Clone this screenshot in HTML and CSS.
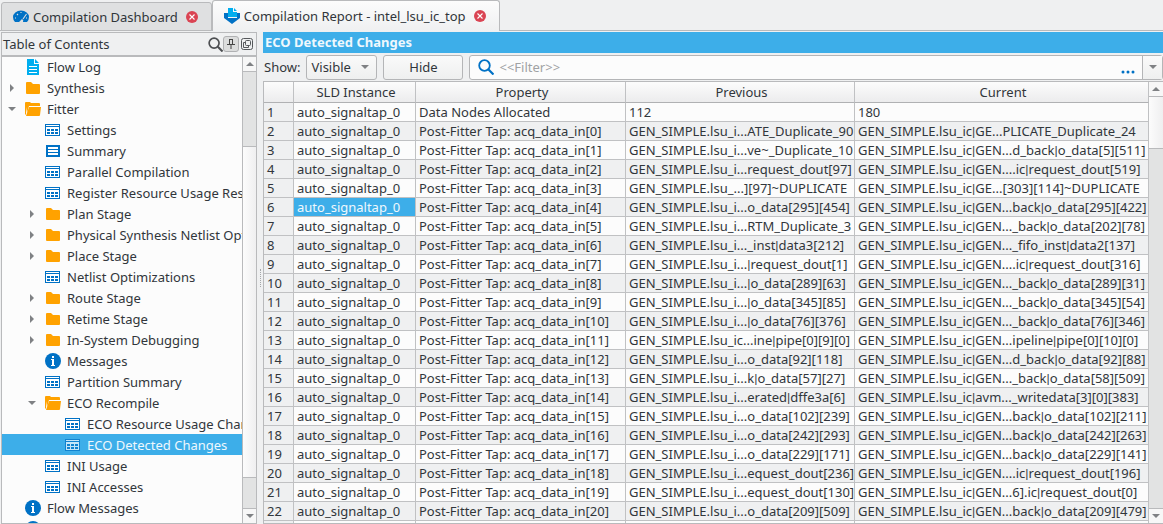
FILE: index.html
```html
<!DOCTYPE html>
<html lang="en">
<head>
<meta charset="utf-8">
<title>Compilation Report - intel_lsu_ic_top</title>
<link rel="stylesheet" href="styles.css">
</head>
<body>
<svg class="defs" aria-hidden="true">
  <symbol id="table" viewBox="0 -1 16 16"><path class="paper" d="M1 2h13v10H1z"/><path d="M0 1h15v12H0zM1 2v1h13V2zM1 4v8h13V4z" fill-rule="evenodd"/><path d="M2 6h3v2H2zM6 6h3v2H6zM10 6h3v2h-3zM2 9h3v2H2zM6 9h3v2H6zM10 9h3v2h-3z"/></symbol>
  <symbol id="summary" viewBox="0 -1 16 16"><path d="M1 1h14v12H1z"/><path d="M3 3h10v2H3zM3 6h10v2H3zM3 9h10v2H3z" fill="#fff"/></symbol>
  <symbol id="folder" viewBox="0 0 16 16"><path fill="#ffa200" d="M2 2h4l2 2h6q1 0 1 1v8q0 1-1 1H2q-1 0-1-1V3q0-1 1-1z"/></symbol>
  <symbol id="folder-open" viewBox="0 0 16 16"><path fill="#ffa200" d="M0 2q0-1 1-1h4l1 1h8q1 0 1 1v2H4L2 12 1 6v8L0 13z"/><path fill="#ffa200" d="M4 6h12l-1 8q0 1-1 1H1l1-3z"/></symbol>
  <symbol id="log" viewBox="0 0 16 16"><path fill="#00aeef" d="M2 0h7v5h5v11H2zM10 0l4 4h-4z"/><path d="M4 7.500h8M4 10.500h8M4 13.500h8" stroke="#fff"/></symbol>
  <symbol id="info" viewBox="0 0 16 16"><circle cx="8" cy="8" r="8"/><path fill="#fff" d="M7 3h2v2H7zM6 6h3v6h1v1H6v-1h1V7H6z"/></symbol>
  <symbol id="search" viewBox="0 0 16 16"><circle cx="6.5" cy="6.5" r="5.3" fill="none" stroke="currentColor" stroke-width="1.8"/><path d="M10.5 10.5l5 5" stroke="currentColor" stroke-width="2.2"/></symbol>
  <symbol id="close" viewBox="0 0 12 12"><circle cx="6" cy="6" r="6" fill="#da4453"/><path d="M3.5 3.5l5 5M8.5 3.5l-5 5" stroke="#fff" stroke-width="1.1"/></symbol>
</svg>
<div class="app">
  <nav class="tabs" aria-label="Open pages">
    <div class="tab">
      <svg class="icon" viewBox="0 0 16 16"><path fill="#0071c5" d="M2 13Q0 11 0 8a8 6.500 0 0 1 16 0q0 3-2 5h-4q1-2-1-3L6 13z"/><path d="M10 10l3.500-5M2 9h1M4 5l1 1M8 3v1M13 9h1" stroke="#dfe0e1" stroke-width="1.100"/></svg>
      <span>Compilation Dashboard</span>
      <button class="close" aria-label="Close Compilation Dashboard"><svg><use href="#close"/></svg></button>
    </div>
    <div class="tab active">
      <svg class="icon" viewBox="0 0 16 16"><path fill="#0071c5" d="M0 5h4v5h9V5h3v5l-8 6-8-6z"/><path fill="#00aeef" d="M4 0h5v4h4v5H4zM10 0l3 3h-3z"/></svg>
      <span>Compilation Report - intel_lsu_ic_top</span>
      <button class="close" aria-label="Close Compilation Report"><svg><use href="#close"/></svg></button>
    </div>
  </nav>
  <main class="work">
    <aside class="contents">
      <header class="contents-head">
        <h2>Table of Contents</h2>
        <button class="tool" aria-label="Search"><svg class="icon"><use href="#search"/></svg></button>
        <button class="tool pin" aria-label="Pin"><svg viewBox="0 0 14 14"><path d="M5 2.500h4M5.500 3v4M8.500 3v4M3 7.500h8M7 8v4" fill="none" stroke="#444"/></svg></button>
        <button class="tool" aria-label="Detach"><svg class="detach" viewBox="0 0 12 12"><rect x=".5" y=".5" width="11" height="11" rx="2"/><rect x="4.500" y="2.500" width="5" height="5" rx="1"/><path d="M4 4.500H2.500v5h5V8"/></svg></button>
      </header>
      <div class="contents-body">
        <ul class="tree">
          <li><i></i><svg class="icon"><use href="#log"/></svg><span>Flow Log</span></li>
          <li><i class="shut"></i><svg class="icon"><use href="#folder"/></svg><span>Synthesis</span></li>
          <li><i class="open"></i><svg class="icon"><use href="#folder-open"/></svg><span>Fitter</span></li>
          <li class="l2"><i></i><svg class="icon"><use href="#table"/></svg><span>Settings</span></li>
          <li class="l2"><i></i><svg class="icon"><use href="#summary"/></svg><span>Summary</span></li>
          <li class="l2"><i></i><svg class="icon"><use href="#table"/></svg><span>Parallel Compilation</span></li>
          <li class="l2"><i></i><svg class="icon"><use href="#table"/></svg><span>Register Resource Usage Restr</span></li>
          <li class="l2"><i class="shut"></i><svg class="icon"><use href="#folder"/></svg><span>Plan Stage</span></li>
          <li class="l2"><i class="shut"></i><svg class="icon"><use href="#folder"/></svg><span>Physical Synthesis Netlist Opt</span></li>
          <li class="l2"><i class="shut"></i><svg class="icon"><use href="#folder"/></svg><span>Place Stage</span></li>
          <li class="l2"><i></i><svg class="icon"><use href="#table"/></svg><span>Netlist Optimizations</span></li>
          <li class="l2"><i class="shut"></i><svg class="icon"><use href="#folder"/></svg><span>Route Stage</span></li>
          <li class="l2"><i class="shut"></i><svg class="icon"><use href="#folder"/></svg><span>Retime Stage</span></li>
          <li class="l2"><i class="shut"></i><svg class="icon"><use href="#folder"/></svg><span>In-System Debugging</span></li>
          <li class="l2"><i></i><svg class="icon"><use href="#info"/></svg><span>Messages</span></li>
          <li class="l2"><i></i><svg class="icon"><use href="#table"/></svg><span>Partition Summary</span></li>
          <li class="l2"><i class="open"></i><svg class="icon"><use href="#folder-open"/></svg><span>ECO Recompile</span></li>
          <li class="l3"><i></i><svg class="icon"><use href="#table"/></svg><span>ECO Resource Usage Chan</span></li>
          <li class="l3 selected"><i></i><svg class="icon"><use href="#table"/></svg><span>ECO Detected Changes</span></li>
          <li class="l2"><i></i><svg class="icon"><use href="#table"/></svg><span>INI Usage</span></li>
          <li class="l2"><i></i><svg class="icon"><use href="#table"/></svg><span>INI Accesses</span></li>
          <li><i></i><svg class="icon"><use href="#info"/></svg><span>Flow Messages</span></li>
          <li><i></i><svg class="icon"><use href="#info"/></svg></li>
        </ul>
        <div class="scroll tree-scroll">
          <button aria-label="Scroll up"><b class="up"></b></button>
          <div class="track before"></div><div class="thumb"></div><div class="track after"></div>
          <button aria-label="Scroll down"><b class="down"></b></button>
        </div>
      </div>
    </aside>
    <div class="splitter"></div>
    <section class="report">
      <h1>ECO Detected Changes</h1>
      <form class="controls">
        <label for="show">Show:</label>
        <div class="select"><select id="show"><option>Visible</option></select><b class="down"></b></div>
        <button type="button" class="hide">Hide</button>
        <div class="filter">
          <svg class="icon"><use href="#search"/></svg>
          <input type="text" aria-label="Filter" placeholder="&lt;&lt;Filter&gt;&gt;">
          <button type="button" class="more" aria-label="Filter options"><svg viewBox="0 0 14 4"><circle cx="2" cy="2" r="1.500"/><circle cx="7" cy="2" r="1.500"/><circle cx="12" cy="2" r="1.500"/></svg></button>
          <button type="button" class="drop" aria-label="Filter history"><b class="down"></b></button>
        </div>
      </form>
      <div class="grid">
        <div class="grid-view">
        <table>
          <colgroup><col class="c-num"><col class="c-inst"><col class="c-prop"><col class="c-prev"><col></colgroup>
          <thead><tr><th></th><th>SLD Instance</th><th>Property</th><th>Previous</th><th>Current</th></tr></thead>
          <tbody>
            <tr><th>1</th><td>auto_signaltap_0</td><td>Data Nodes Allocated</td><td>112</td><td>180</td></tr>
            <tr><th>2</th><td>auto_signaltap_0</td><td>Post-Fitter Tap: acq_data_in[0]</td><td>GEN_SIMPLE.lsu_i...ATE_Duplicate_90</td><td>GEN_SIMPLE.lsu_ic<s>|</s>GE...PLICATE_Duplicate_24</td></tr>
            <tr><th>3</th><td>auto_signaltap_0</td><td>Post-Fitter Tap: acq_data_in[1]</td><td>GEN_SIMPLE.lsu_i...ve~_Duplicate_10</td><td>GEN_SIMPLE.lsu_ic<s>|</s>GEN...d_back<s>|</s>o_data[5][511]</td></tr>
            <tr><th>4</th><td>auto_signaltap_0</td><td>Post-Fitter Tap: acq_data_in[2]</td><td>GEN_SIMPLE.lsu_i...request_dout[97]</td><td>GEN_SIMPLE.lsu_ic<s>|</s>GEN....ic<s>|</s>request_dout[519]</td></tr>
            <tr><th>5</th><td>auto_signaltap_0</td><td>Post-Fitter Tap: acq_data_in[3]</td><td>GEN_SIMPLE.lsu_...][97]~DUPLICATE</td><td>GEN_SIMPLE.lsu_ic<s>|</s>GE...[303][114]~DUPLICATE</td></tr>
            <tr><th>6</th><td class="selected">auto_signaltap_0</td><td>Post-Fitter Tap: acq_data_in[4]</td><td>GEN_SIMPLE.lsu_i...o_data[295][454]</td><td>GEN_SIMPLE.lsu_ic<s>|</s>GEN...back<s>|</s>o_data[295][422]</td></tr>
            <tr><th>7</th><td>auto_signaltap_0</td><td>Post-Fitter Tap: acq_data_in[5]</td><td>GEN_SIMPLE.lsu_i...RTM_Duplicate_3</td><td>GEN_SIMPLE.lsu_ic<s>|</s>GEN..._back<s>|</s>o_data[202][78]</td></tr>
            <tr><th>8</th><td>auto_signaltap_0</td><td>Post-Fitter Tap: acq_data_in[6]</td><td>GEN_SIMPLE.lsu_i..._inst<s>|</s>data3[212]</td><td>GEN_SIMPLE.lsu_ic<s>|</s>GEN..._fifo_inst<s>|</s>data2[137]</td></tr>
            <tr><th>9</th><td>auto_signaltap_0</td><td>Post-Fitter Tap: acq_data_in[7]</td><td>GEN_SIMPLE.lsu_i...<s>|</s>request_dout[1]</td><td>GEN_SIMPLE.lsu_ic<s>|</s>GEN....ic<s>|</s>request_dout[316]</td></tr>
            <tr><th>10</th><td>auto_signaltap_0</td><td>Post-Fitter Tap: acq_data_in[8]</td><td>GEN_SIMPLE.lsu_i...<s>|</s>o_data[289][63]</td><td>GEN_SIMPLE.lsu_ic<s>|</s>GEN..._back<s>|</s>o_data[289][31]</td></tr>
            <tr><th>11</th><td>auto_signaltap_0</td><td>Post-Fitter Tap: acq_data_in[9]</td><td>GEN_SIMPLE.lsu_i...<s>|</s>o_data[345][85]</td><td>GEN_SIMPLE.lsu_ic<s>|</s>GEN..._back<s>|</s>o_data[345][54]</td></tr>
            <tr><th>12</th><td>auto_signaltap_0</td><td>Post-Fitter Tap: acq_data_in[10]</td><td>GEN_SIMPLE.lsu_i...<s>|</s>o_data[76][376]</td><td>GEN_SIMPLE.lsu_ic<s>|</s>GEN..._back<s>|</s>o_data[76][346]</td></tr>
            <tr><th>13</th><td>auto_signaltap_0</td><td>Post-Fitter Tap: acq_data_in[11]</td><td>GEN_SIMPLE.lsu_ic...ine<s>|</s>pipe[0][9][0]</td><td>GEN_SIMPLE.lsu_ic<s>|</s>GEN...ipeline<s>|</s>pipe[0][10][0]</td></tr>
            <tr><th>14</th><td>auto_signaltap_0</td><td>Post-Fitter Tap: acq_data_in[12]</td><td>GEN_SIMPLE.lsu_i...o_data[92][118]</td><td>GEN_SIMPLE.lsu_ic<s>|</s>GEN...d_back<s>|</s>o_data[92][88]</td></tr>
            <tr><th>15</th><td>auto_signaltap_0</td><td>Post-Fitter Tap: acq_data_in[13]</td><td>GEN_SIMPLE.lsu_i...k<s>|</s>o_data[57][27]</td><td>GEN_SIMPLE.lsu_ic<s>|</s>GEN..._back<s>|</s>o_data[58][509]</td></tr>
            <tr><th>16</th><td>auto_signaltap_0</td><td>Post-Fitter Tap: acq_data_in[14]</td><td>GEN_SIMPLE.lsu_i...erated<s>|</s>dffe3a[6]</td><td>GEN_SIMPLE.lsu_ic<s>|</s>avm..._writedata[3][0][383]</td></tr>
            <tr><th>17</th><td>auto_signaltap_0</td><td>Post-Fitter Tap: acq_data_in[15]</td><td>GEN_SIMPLE.lsu_i...o_data[102][239]</td><td>GEN_SIMPLE.lsu_ic<s>|</s>GEN...back<s>|</s>o_data[102][211]</td></tr>
            <tr><th>18</th><td>auto_signaltap_0</td><td>Post-Fitter Tap: acq_data_in[16]</td><td>GEN_SIMPLE.lsu_i...o_data[242][293]</td><td>GEN_SIMPLE.lsu_ic<s>|</s>GEN...back<s>|</s>o_data[242][263]</td></tr>
            <tr><th>19</th><td>auto_signaltap_0</td><td>Post-Fitter Tap: acq_data_in[17]</td><td>GEN_SIMPLE.lsu_i...o_data[229][171]</td><td>GEN_SIMPLE.lsu_ic<s>|</s>GEN...back<s>|</s>o_data[229][141]</td></tr>
            <tr><th>20</th><td>auto_signaltap_0</td><td>Post-Fitter Tap: acq_data_in[18]</td><td>GEN_SIMPLE.lsu_i...equest_dout[236]</td><td>GEN_SIMPLE.lsu_ic<s>|</s>GEN....ic<s>|</s>request_dout[196]</td></tr>
            <tr><th>21</th><td>auto_signaltap_0</td><td>Post-Fitter Tap: acq_data_in[19]</td><td>GEN_SIMPLE.lsu_i...equest_dout[130]</td><td>GEN_SIMPLE.lsu_ic<s>|</s>GEN...6].ic<s>|</s>request_dout[0]</td></tr>
            <tr><th>22</th><td>auto_signaltap_0</td><td>Post-Fitter Tap: acq_data_in[20]</td><td>GEN_SIMPLE.lsu_i...o_data[209][509]</td><td>GEN_SIMPLE.lsu_ic<s>|</s>GEN...back<s>|</s>o_data[209][479]</td></tr>
            <tr><th></th><td></td><td></td><td></td><td></td></tr>
          </tbody>
        </table>
        </div>
        <div class="scroll grid-scroll">
          <button aria-label="Scroll up"><b class="up"></b></button>
          <div class="thumb"></div><div class="track after"></div>
          <button aria-label="Scroll down"><b class="down"></b></button>
        </div>
      </div>
    </section>
  </main>
</div>
</body>
</html>
```
FILE: styles.css
```css
* { box-sizing: border-box; }
body {
  margin: 0;
  background: #eff0f1;
  color: #31363b;
  font: 13px/18px "Noto Sans", "Open Sans", sans-serif;
}
button, input, select { font: inherit; color: inherit; padding: 0; margin: 0; border: 0; background: none; }
h1, h2 { margin: 0; font-size: 13px; line-height: 18px; }
svg { display: block; fill: #0071c5; }
.defs { position: absolute; width: 0; height: 0; }
.icon { width: 16px; height: 16px; flex: none; }
.paper { fill: #fff; }

.up, .down { width: 0; height: 0; border: 4px solid transparent; }
.up { border-top: 0; border-bottom-color: #7f8184; }
.down { border-bottom: 0; border-top-color: #7f8184; }

.app { display: flex; flex-direction: column; height: 100vh; overflow: hidden; }

.tabs { display: flex; align-items: flex-end; height: 31px; flex: none; padding-left: 1px; box-shadow: inset 0 -1px #b9babc; }
.tab {
  display: flex; align-items: center; gap: 4px;
  height: 29px; padding: 0 13px 0 11px; white-space: nowrap;
  background: #dfe0e1; border: 1px solid #b9babc; border-radius: 3px 3px 0 0;
}
.tab.active { height: 31px; background: linear-gradient(#fcfcfc, #eff0f1); border-bottom: 0; }
.close { margin-left: 4px; }
.close svg { width: 12px; height: 12px; }

.work { display: flex; flex: 1; min-height: 0; padding-top: 1px; }

.contents { display: flex; flex-direction: column; width: 256px; flex: none; margin-left: 1px; border: 1px solid #b9babc; }
.contents-head { display: flex; align-items: center; height: 24px; flex: none; padding: 0 1px; border-bottom: 2px solid #b9babc; }
.contents-head h2 { flex: 1; font-weight: 400; }
.tool { display: grid; place-items: center; width: 16px; height: 16px; color: #4d4f52; }
.tool .icon { width: 15px; height: 15px; }
.tool.pin { background: #dcdddd; border: 1px solid #b0b1b3; border-radius: 3px; }
.pin svg { width: 14px; height: 14px; }
.detach { width: 12px; height: 12px; fill: none; stroke: #55585b; }

.contents-body { display: flex; flex: 1; min-height: 0; background: #fcfcfc; overflow: hidden; }
.tree { flex: 1; min-width: 0; margin: -1px 0 0; padding: 0; overflow: hidden; list-style: none; }
.tree li { display: flex; align-items: center; height: 21px; padding-left: 3px; white-space: nowrap; }
.tree li.l2 { padding-left: 23px; }
.tree li.l3 { padding-left: 43px; }
.tree .icon { margin-top: 1px; }
.tree i { display: flex; align-items: center; width: 20px; flex: none; padding-left: 3px; }
.tree i.shut { padding-left: 5px; }
.tree span { padding-left: 6px; }
.tree i::before { content: ""; border: 4px solid transparent; }
.tree i.shut::before { border-right: 0; border-left-color: #7f8184; }
.tree i.open::before { border-bottom: 0; border-top-color: #7f8184; }
.tree .selected { background: #3daee9; color: #eff8fd; }
.tree .selected svg { opacity: .7; }

.scroll { display: flex; flex-direction: column; width: 14px; flex: none; }
.tree-scroll { border-left: 1px solid #b9babc; }
.scroll button { display: grid; place-items: center; height: 14px; flex: none; background: #f7f7f7; }
.track { background: #e2e3e3; }
.thumb { background: linear-gradient(90deg, #fcfcfc, #efeff0); border: solid #b9babc; border-width: 1px 0; }
.before { flex: 75; border-top: 1px solid #b9babc; }
.tree-scroll .thumb { flex: 333; }
.tree-scroll .after { flex: 30; border-bottom: 1px solid #b9babc; }
.grid-scroll .thumb { flex: 51; }
.grid-scroll .after { flex: 363; border-bottom: 1px solid #b9babc; }

.splitter { display: grid; place-items: center; width: 6px; flex: none; }
.splitter::before { content: ""; height: 18px; border-left: 1px dotted #a4a6a8; }

.report { display: flex; flex-direction: column; flex: 1; min-width: 0; }
.report h1 { flex: none; height: 21px; padding: 1px 2px; background: #3daee9; color: #eff8fd; }
.controls { display: flex; align-items: center; gap: 6px; height: 28px; flex: none; margin: 0; padding-left: 1px; }
.select { display: flex; align-items: center; width: 71px; height: 25px; padding-right: 7px; }
.select select { flex: 1; min-width: 0; height: 23px; padding-left: 4px; appearance: none; outline: 0; }
.select, .hide { border: 1px solid #b4b5b7; border-radius: 3px; background: linear-gradient(#fafafa, #eeefef); }
.hide { width: 80px; height: 25px; }
.filter { display: flex; align-items: center; flex: 1; min-width: 0; height: 25px; padding-left: 8px; background: #fcfcfc; border: 1px solid #b4b5b7; border-radius: 3px; color: #0071c5; }
.filter input { flex: 1; min-width: 0; padding-left: 5px; outline: 0; color: #31363b; }
.filter input::placeholder { color: #a0a2a4; opacity: 1; }
.more { width: 14px; height: 14px; margin-right: 7px; align-self: flex-end; }
.more svg { width: 14px; height: 4px; }
.drop { display: grid; place-items: center; width: 20px; height: 23px; border-left: 1px solid #b4b5b7; background: linear-gradient(#fafafa, #eeefef); }

.grid { display: flex; flex: 1; min-height: 0; border: solid #b9babc; border-width: 1px 0 1px 1px; }
.grid-view { flex: 1; min-width: 0; overflow: hidden; background: #fcfcfc; }
table { width: 100%; table-layout: fixed; border-spacing: 0; }
.c-num { width: 30px; }
.c-inst { width: 122px; }
.c-prop { width: 210px; }
.c-prev { width: 229px; }
th, td { height: 19px; padding: 0 0 0 3px; border: solid #c0c1c3; border-width: 0 1px 1px 0; text-align: left; font-weight: 400; white-space: nowrap; overflow: hidden; }
thead th { height: 21px; text-align: center; background: linear-gradient(#fcfcfc, #ececed); border-bottom-color: #b0b1b3; }
tbody th { background: #eff0f1; }
tbody tr:nth-child(even) td { background: #eff0f1; }
tbody tr td.selected { background: #3daee9; color: #eff8fd; }

/* hierarchy separator in node paths, set in a face with a narrow bar */
td s { font-family: Roboto, "Liberation Sans", sans-serif; line-height: 1; text-decoration: none; }
```
